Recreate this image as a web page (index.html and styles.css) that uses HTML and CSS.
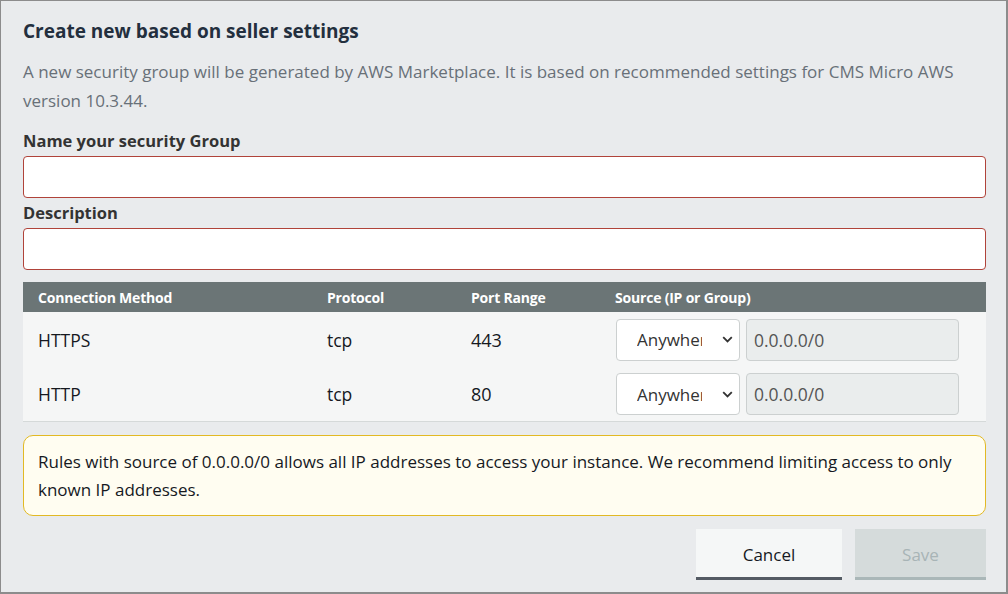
FILE: index.html
```html
<!DOCTYPE html>
<html>
<head>
<meta charset="utf-8">
<link rel="stylesheet" href="styles.css">
</head>
<body>
<div class="panel">
  <h2 class="title">Create new based on seller settings</h2>
  <p class="intro">A new security group will be generated by AWS Marketplace. It is based on recommended settings for CMS Micro AWS version 10.3.44.</p>
  <label class="label">Name your security Group</label>
  <div class="field"></div>
  <label class="label">Description</label>
  <div class="field"></div>

  <div class="table">
    <div class="row head">
      <div class="cell">Connection Method</div>
      <div class="cell">Protocol</div>
      <div class="cell">Port Range</div>
      <div class="cell">Source (IP or Group)</div>
    </div>
    <div class="row">
      <div class="cell">HTTPS</div>
      <div class="cell">tcp</div>
      <div class="cell num">443</div>
      <div class="cell source">
        <div class="select"><span class="sel-text">Anywhere</span><svg class="chev" width="11" height="7" viewBox="0 0 11 7"><path d="M1.2 1.2 L5.5 5.5 L9.8 1.2" fill="none" stroke="#333" stroke-width="1.8"/></svg></div>
        <div class="ip">0.0.0.0/0</div>
      </div>
    </div>
    <div class="row">
      <div class="cell">HTTP</div>
      <div class="cell">tcp</div>
      <div class="cell num">80</div>
      <div class="cell source">
        <div class="select"><span class="sel-text">Anywhere</span><svg class="chev" width="11" height="7" viewBox="0 0 11 7"><path d="M1.2 1.2 L5.5 5.5 L9.8 1.2" fill="none" stroke="#333" stroke-width="1.8"/></svg></div>
        <div class="ip">0.0.0.0/0</div>
      </div>
    </div>
  </div>

  <div class="alert">Rules with source of 0.0.0.0/0 allows all IP addresses to access your instance. We recommend limiting access to only known IP addresses.</div>

  <div class="actions">
    <button class="btn cancel">Cancel</button>
    <button class="btn save">Save</button>
  </div>
</div>
</body>
</html>
```

FILE: styles.css
```css
* { box-sizing: border-box; }
html, body { margin: 0; padding: 0; }
body {
  font-family: "Open Sans", "Noto Sans", sans-serif;
  color: #16191f;
  background: #e9ebed;
}
.panel {
  width: 1008px;
  height: 594px;
  border: 1px solid #8c8c8c;
  border-right-width: 2px;
  border-bottom-width: 2px;
  background: #e9ebed;
  padding: 18px 20px 0 22px;
  display: flex;
  flex-direction: column;
}
.title {
  margin: 0;
  font-size: 19px;
  line-height: 24px;
  font-weight: 700;
  color: #232f3e;
}
.intro {
  margin: 14px 0 0;
  font-size: 17px;
  line-height: 29px;
  color: #687078;
}
.label {
  display: block;
  margin-top: 14px;
  font-size: 16.5px;
  line-height: 24px;
  font-weight: 700;
  color: #333;
}
.label + .field { margin-top: 3px; }
.field + .label { margin-top: 3px; }
.field {
  height: 42px;
  background: #fff;
  border: 1px solid #b0433a;
  border-radius: 4px;
}
.table {
  margin-top: 12px;
  background: #f5f6f6;
  border-bottom: 1px solid #d5d9d9;
}
.row {
  display: grid;
  grid-template-columns: 289px 144px 144px 1fr;
  height: 55px;
  align-items: center;
  font-size: 17.5px;
  color: #16191f;
}
.row.head {
  height: 30px;
  background: #6b7576;
  color: #fff;
  font-size: 14px;
  font-weight: 700;
  letter-spacing: -0.2px;
}
.cell { padding-left: 15px; white-space: nowrap; }
.num { font-size: 18px; }
.row:last-child { height: 54px; }
.source { display: flex; gap: 6px; align-items: center; padding-left: 16px; }
.select {
  width: 124px;
  height: 42px;
  background: #fff;
  border: 1px solid #ccd0d0;
  border-radius: 4px;
  display: flex;
  align-items: center;
  padding-left: 20px;
  padding-right: 6px;
  font-size: 17px;
}
.sel-text {
  width: 65px;
  overflow: hidden;
  color: #333;
}
.chev { margin-left: auto; margin-right: 0; }
.ip {
  width: 213px;
  height: 42px;
  background: #eaeded;
  border: 1px solid #ccd0d0;
  border-radius: 4px;
  display: flex;
  align-items: center;
  padding-left: 7px;
  color: #555;
  font-size: 17.5px;
}
.alert {
  margin-top: 13px;
  background: #fffdf1;
  border: 1px solid #e2b924;
  border-radius: 10px;
  padding: 12px 14px 11px;
  font-size: 17px;
  line-height: 28px;
  color: #16191f;
}
.actions {
  margin-top: 13px;
  display: flex;
  justify-content: flex-end;
  gap: 13px;
}
.btn {
  height: 51px;
  border: none;
  border-bottom: 3px solid #545b64;
  font-family: inherit;
  font-size: 17px;
  padding: 0;
  padding-top: 2px;
}
.cancel { width: 146px; background: #f5f7f7; color: #16191f; }
.save { width: 131px; background: #d5dbdb; color: #a8b4b6; border-bottom-color: #aab7b8; }
```
